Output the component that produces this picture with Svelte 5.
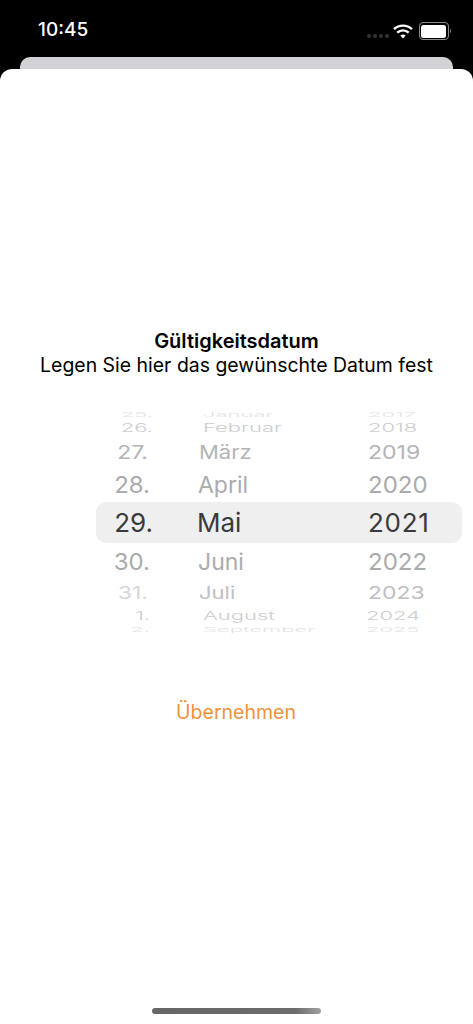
<script>
  const wheel = [
    { h: 10, day: "25.", month: "Januar", year: "2017", cls: "r5" },
    { h: 16, day: "26.", month: "Februar", year: "2018", cls: "r4" },
    { h: 32, day: "27.", month: "März", year: "2019", cls: "r3" },
    { h: 34, day: "28.", month: "April", year: "2020", cls: "r2" },
    { h: 41, day: "29.", month: "Mai", year: "2021", cls: "r1" },
    { h: 38, day: "30.", month: "Juni", year: "2022", cls: "r2" },
    { h: 24, day: "31.", month: "Juli", year: "2023", cls: "r3 low" },
    { h: 22, day: "1.", month: "August", year: "2024", cls: "r4 low" },
    { h: 6, day: "2.", month: "September", year: "2025", cls: "r5 low" }
  ]
</script>

<div class="screen">
  <div class="status">
    <span class="time">10:45</span>
    <div class="indicators">
      <div class="signal"><i></i><i></i><i></i><i></i></div>
      <svg class="wifi" width="20" height="15" viewBox="0 0 20 15">
        <path d="M1 5.2a13 13 0 0 1 18 0" fill="none" stroke="#fff" stroke-width="2.4" />
        <path d="M4.3 8.6a8.3 8.3 0 0 1 11.4 0" fill="none" stroke="#fff" stroke-width="2.4" />
        <path d="M7.4 11.6a3.8 3.8 0 0 1 5.2 0L10 14.4z" fill="#fff" />
      </svg>
      <div class="battery"><div class="level"></div></div>
      <div class="cap"></div>
    </div>
  </div>

  <div class="back-sheet"></div>

  <div class="sheet">
    <div class="heading">
      <div class="title">Gültigkeitsdatum</div>
      <div class="subtitle">Legen Sie hier das gewünschte Datum fest</div>
    </div>

    <div class="picker">
      <div class="selection"></div>
      {#each wheel as row}
        <div class="row {row.cls}" style="height: {row.h}px">
          <span class="day">{row.day}</span>
          <span class="month">{row.month}</span>
          <span class="year">{row.year}</span>
        </div>
      {/each}
    </div>

    <button class="apply">Übernehmen</button>

    <div class="home"></div>
  </div>
</div>

<style>
  :global(body) {
    margin: 0;
    background: #000;
    font-family: Inter, "Liberation Sans", sans-serif;
  }

  .screen {
    width: 473px;
    height: 1024px;
    display: flex;
    flex-direction: column;
    overflow: hidden;
    background: #000;
  }

  .status {
    height: 57px;
    flex: none;
    display: flex;
    justify-content: space-between;
    align-items: flex-start;
    padding: 0 22px 0 38px;
  }

  .time {
    margin-top: 19px;
    color: #fff;
    font-size: 19px;
    font-weight: 500;
    line-height: 22px;
  }

  .indicators {
    display: flex;
    align-items: center;
    margin-top: 22px;
  }

  .signal {
    display: flex;
    gap: 2px;
    margin: 9px 4px 0 0;
  }

  .signal i {
    width: 4px;
    height: 4px;
    border-radius: 50%;
    background: #333;
  }

  .wifi {
    margin-right: 6px;
  }

  .battery {
    width: 25px;
    height: 13px;
    padding: 1.5px;
    border: 1px solid #8a8a8a;
    border-radius: 4px;
  }

  .level {
    height: 100%;
    background: #fff;
    border-radius: 2.5px;
  }

  .cap {
    width: 1.5px;
    height: 4px;
    margin-left: 1px;
    background: #777;
    border-radius: 0 1px 1px 0;
  }

  .back-sheet {
    height: 12px;
    flex: none;
    margin: 0 20px;
    background: #d2d2d6;
    border-radius: 10px 10px 0 0;
  }

  .sheet {
    flex: 1;
    display: flex;
    flex-direction: column;
    align-items: center;
    background: #fff;
    border-radius: 12px 12px 0 0;
  }

  .heading {
    margin-top: 260px;
    text-align: center;
    color: #000;
    font-size: 19.45px;
    line-height: 24px;
  }

  .title {
    font-size: 20px;
    font-weight: 600;
  }

  .picker {
    position: relative;
    align-self: stretch;
    margin-top: 33px;
    height: 223px;
  }

  .selection {
    position: absolute;
    left: 96px;
    right: 11px;
    top: 92px;
    height: 41px;
    background: #efeff0;
    border-radius: 10px;
  }

  .row {
    position: relative;
    display: grid;
    grid-template-columns: 153px 168px 1fr;
    align-items: center;
    font-size: 26px;
    line-height: 20px;
  }

  .row span {
    white-space: nowrap;
  }

  .day {
    justify-self: end;
  }

  .month {
    margin-left: 44px;
  }

  .year {
    margin-left: 47px;
  }

  .r1 { color: #3a3a3c; }
  .r1 .year { letter-spacing: 0.7px; }

  .r2 { color: #ababad; font-size: 24px; }
  .r2 span { transform: scaleY(0.97); }
  .r2 .day { margin-right: 3px; }
  .r2 .month { margin-left: 45px; font-size: 23px; }

  .r3 { color: #b4b4b6; font-size: 23px; }
  .r3 span { transform: scaleY(0.84); }
  .r3 .day { margin-right: 5px; }
  .r3 .month { margin-left: 46px; font-size: 22px; }
  .r3.low { color: #c0c0c2; }
  .r3.low span { transform: scaleY(0.76); }
  .r3.low .day { color: #d8d8da; }

  .r4 { color: #cdcdcf; font-size: 22px; font-weight: 300; line-height: 14px; }
  .r4 span { transform: scaleY(0.55); }
  .r4 .month { margin-left: 50px; }
  .r4.low .day { margin-right: 3px; }
  .r4.low .year { margin-left: 45px; }

  .r5 { color: #e4e4e6; font-size: 22px; font-weight: 300; line-height: 6px; }
  .r5 span { transform: scaleY(0.3); }
  .r5 .month { margin-left: 50px; }
  .r5.low .day { margin-right: 3px; }
  .r5.low .year { margin-left: 45px; }

  .apply {
    margin-top: 67px;
    margin-right: 1px;
    padding: 0;
    border: none;
    background: none;
    color: #f0923a;
    font-family: inherit;
    font-size: 19.5px;
    line-height: 24px;
  }

  .home {
    margin-top: auto;
    margin-bottom: 10px;
    width: 169px;
    height: 6px;
    border-radius: 3px;
    background: linear-gradient(to right, #666 0, #6c6c6c 85%, #a0a0a0 100%);
  }
</style>
